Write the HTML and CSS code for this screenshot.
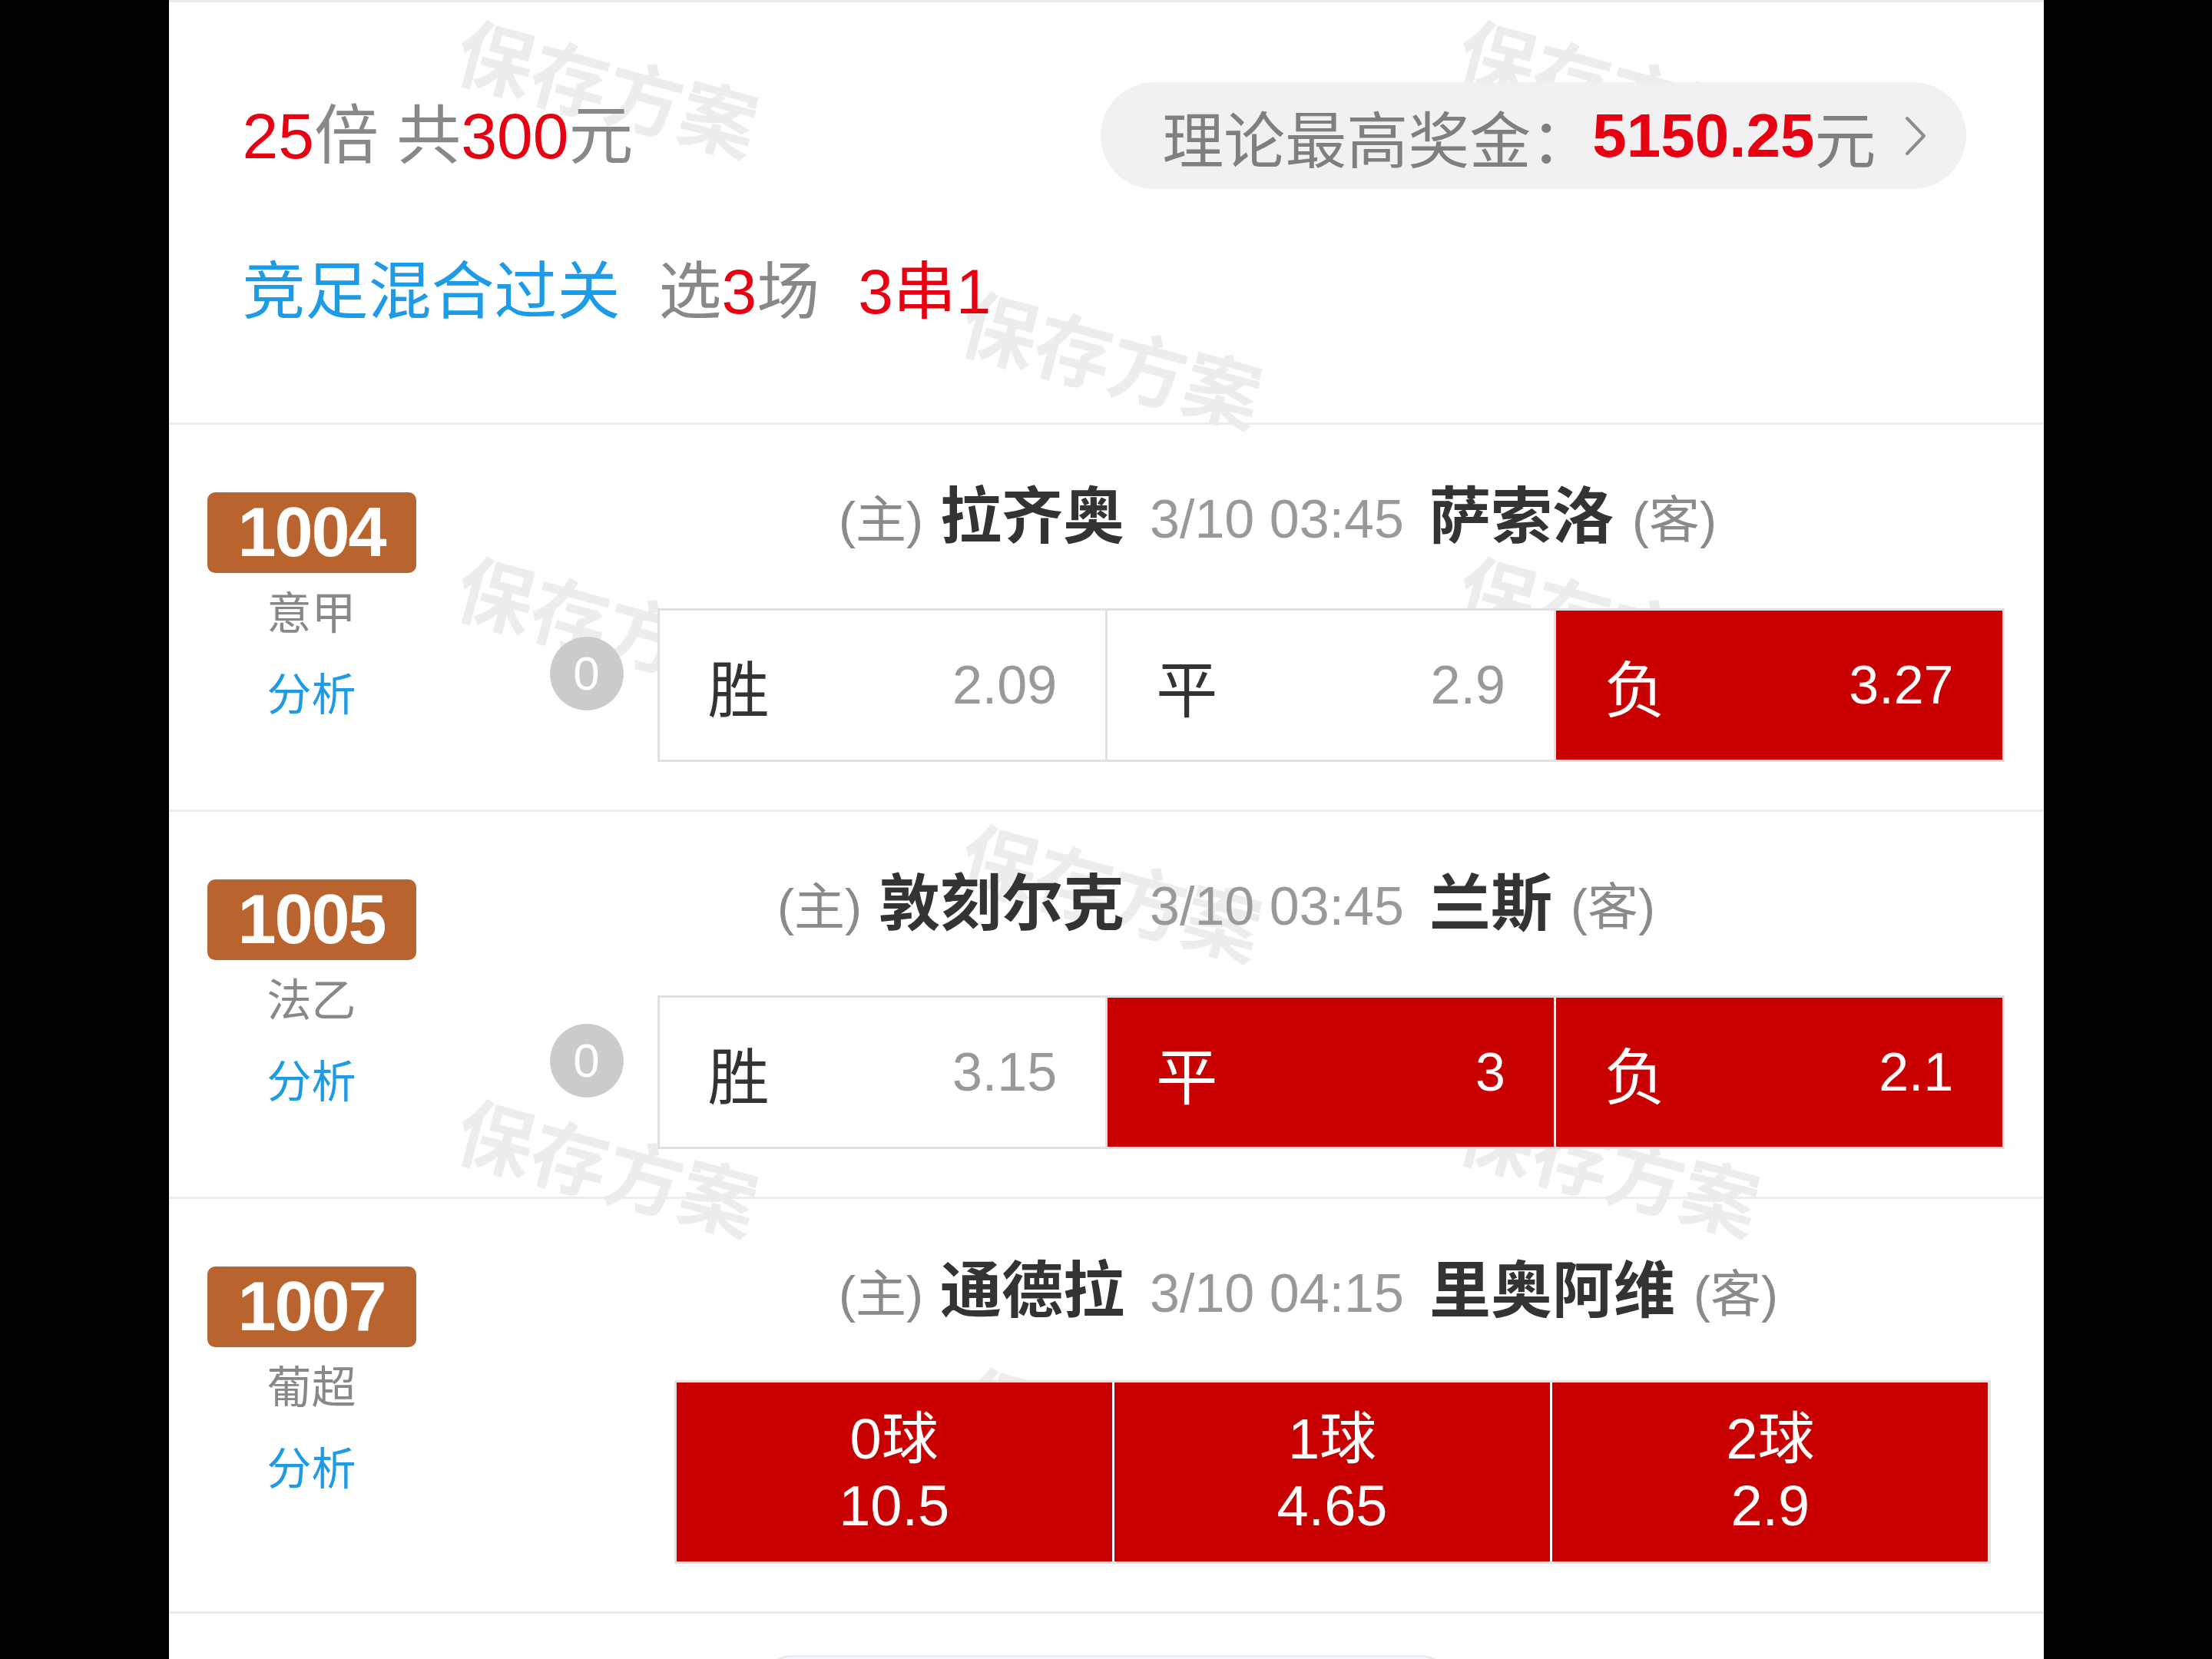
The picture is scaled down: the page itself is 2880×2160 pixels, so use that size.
FILE: index.html
```html
<!DOCTYPE html>
<html lang="zh-CN">
<head>
    <meta charset="UTF-8">
    <meta name="viewport" content="width=device-width, initial-scale=1.0">
    <title>方案详情</title>
    <link rel="stylesheet" href="styles.css">
</head>
<body>
    <div class="panel">
        <div class="watermarks">
            <span class="wm">保存方案</span>
            <span class="wm">保存方案</span>
            <span class="wm">保存方案</span>
            <span class="wm">保存方案</span>
            <span class="wm">保存方案</span>
            <span class="wm">保存方案</span>
            <span class="wm">保存方案</span>
            <span class="wm">保存方案</span>
            <span class="wm">保存方案</span>
        </div>

        <section class="summary">
            <div class="summary-top">
                <div class="stake"><em>25</em>倍 共<em>300</em>元</div>
                <div class="prize">
                    理论最高奖金：<b>5150.25</b>元
                    <svg class="chev" viewBox="0 0 30 54"><polyline points="4,4 26,27 4,50" fill="none" stroke="#8c8c8c" stroke-width="4" stroke-linecap="round" stroke-linejoin="round"/></svg>
                </div>
            </div>
            <div class="plan">
                <span class="plan-type">竞足混合过关</span>
                <span class="plan-pick">选<em>3</em>场</span>
                <span class="plan-pass">3串1</span>
            </div>
        </section>

        <div class="match">
            <div class="match-side">
                <div class="match-no">1004</div>
                <div class="league">意甲</div>
                <div class="analyse">分析</div>
            </div>
            <div class="match-main">
                <div class="teams">
                    <div class="home"><span class="tag">(主)</span><span class="name">拉齐奥</span></div>
                    <div class="time">3/10 03:45</div>
                    <div class="away"><span class="name">萨索洛</span><span class="tag">(客)</span></div>
                </div>
                <div class="bet">
                    <div class="handicap">0</div>
                    <div class="odds">
                        <div class="odd"><span class="odd-label">胜</span><span class="odd-val">2.09</span></div>
                        <div class="odd"><span class="odd-label">平</span><span class="odd-val">2.9</span></div>
                        <div class="odd on"><span class="odd-label">负</span><span class="odd-val">3.27</span></div>
                    </div>
                </div>
            </div>
        </div>

        <div class="match">
            <div class="match-side">
                <div class="match-no">1005</div>
                <div class="league">法乙</div>
                <div class="analyse">分析</div>
            </div>
            <div class="match-main">
                <div class="teams">
                    <div class="home"><span class="tag">(主)</span><span class="name">敦刻尔克</span></div>
                    <div class="time">3/10 03:45</div>
                    <div class="away"><span class="name">兰斯</span><span class="tag">(客)</span></div>
                </div>
                <div class="bet">
                    <div class="handicap">0</div>
                    <div class="odds">
                        <div class="odd"><span class="odd-label">胜</span><span class="odd-val">3.15</span></div>
                        <div class="odd on"><span class="odd-label">平</span><span class="odd-val">3</span></div>
                        <div class="odd on"><span class="odd-label">负</span><span class="odd-val">2.1</span></div>
                    </div>
                </div>
            </div>
        </div>

        <div class="match">
            <div class="match-side">
                <div class="match-no">1007</div>
                <div class="league">葡超</div>
                <div class="analyse">分析</div>
            </div>
            <div class="match-main">
                <div class="teams">
                    <div class="home"><span class="tag">(主)</span><span class="name">通德拉</span></div>
                    <div class="time">3/10 04:15</div>
                    <div class="away"><span class="name">里奥阿维</span><span class="tag">(客)</span></div>
                </div>
                <div class="goals">
                    <div class="goal on"><span>0球</span><span>10.5</span></div>
                    <div class="goal on"><span>1球</span><span>4.65</span></div>
                    <div class="goal on"><span>2球</span><span>2.9</span></div>
                </div>
            </div>
        </div>

        <div class="more"></div>
    </div>
</body>
</html>
```

FILE: styles.css
```css
* {
    box-sizing: border-box;
}
body {
    margin: 0;
    background: #000;
    font-family: "Liberation Sans", "Noto Sans CJK SC", sans-serif;
    height: 2160px;
    overflow: hidden;
}
em {
    font-style: normal;
}
.panel {
    width: 2441px;
    min-height: 2160px;
    margin: 0 auto;
    background: #fff;
    border-top: 3px solid #ececec;
    position: relative;
}

/* watermark tiles */
.watermarks {
    position: absolute;
    top: 0;
    left: 0;
    right: 0;
    bottom: 0;
    overflow: hidden;
}
.wm {
    position: absolute;
    width: 400px;
    font-size: 100px;
    line-height: 100px;
    font-weight: 700;
    color: #ededed;
    white-space: nowrap;
    transform: rotate(15deg);
}
.wm:nth-child(1) { left: 370px; top: 66px; }
.wm:nth-child(2) { left: 1674px; top: 66px; }
.wm:nth-child(3) { left: 1026px; top: 419px; }
.wm:nth-child(4) { left: 370px; top: 764px; }
.wm:nth-child(5) { left: 1674px; top: 764px; }
.wm:nth-child(6) { left: 1026px; top: 1113px; }
.wm:nth-child(7) { left: 370px; top: 1471px; }
.wm:nth-child(8) { left: 1674px; top: 1471px; }
.wm:nth-child(9) { left: 1026px; top: 1820px; }

/* summary */
.summary {
    position: relative;
    padding: 104px 101px 120px 96px;
    border-bottom: 3px solid #ececec;
}
.summary-top {
    display: flex;
    justify-content: space-between;
    align-items: center;
    height: 139px;
}
.stake {
    font-size: 84px;
    line-height: 100px;
    color: #888;
}
.stake em,
.plan em {
    color: #e60012;
}
.prize {
    display: flex;
    align-items: center;
    height: 139px;
    padding: 0 51px 0 80px;
    border-radius: 70px;
    background: #f1f1f1;
    font-size: 80px;
    color: #7f7f7f;
    white-space: nowrap;
}
.prize b {
    color: #e60012;
}
.chev {
    width: 30px;
    height: 54px;
    margin-left: 36px;
}
.plan {
    display: flex;
    margin-top: 84px;
    font-size: 82px;
    line-height: 100px;
    color: #888;
}
.plan-type {
    color: #1e9be6;
}
.plan-pick,
.plan-pass {
    margin-left: 50px;
}
.plan-pass {
    color: #e60012;
}

/* match rows */
.match {
    position: relative;
    display: flex;
    align-items: flex-start;
    padding: 70px 51px 62px 50px;
    border-bottom: 3px solid #ececec;
}
.match-side {
    width: 272px;
    margin-top: 18px;
    text-align: center;
}
.match-no {
    height: 105px;
    line-height: 105px;
    border-radius: 10px;
    background: #b9642f;
    color: #fff;
    font-size: 90px;
    font-weight: 700;
    letter-spacing: -2px;
}
.league {
    margin-top: 13px;
    font-size: 58px;
    line-height: 80px;
    color: #888;
}
.analyse {
    margin-top: 26px;
    font-size: 58px;
    line-height: 80px;
    color: #1e9be6;
}
.match-main {
    flex: 1;
    margin-left: 174px;
}
.teams {
    display: grid;
    grid-template-columns: 1fr auto 1fr;
    align-items: baseline;
    height: 100px;
    line-height: 100px;
    white-space: nowrap;
}
.home {
    justify-self: end;
}
.away {
    justify-self: start;
}
.time {
    margin: 0 33px;
    font-size: 70px;
    color: #999;
}
.tag {
    font-size: 66px;
    color: #8a8a8a;
}
.home .tag {
    margin-right: 22px;
}
.away .tag {
    margin-left: 24px;
}
.name {
    font-size: 80px;
    font-weight: 700;
    color: #333;
}
.bet {
    display: flex;
    align-items: center;
    margin-top: 69px;
}
.handicap {
    flex: none;
    width: 96px;
    height: 96px;
    margin: 0 44px 30px 0;
    border-radius: 50%;
    background: #cbcbcb;
    color: #fff;
    font-size: 62px;
    line-height: 96px;
    text-align: center;
}
.odds {
    flex: 1;
    display: grid;
    grid-template-columns: repeat(3, 1fr);
    gap: 3px;
    padding: 3px;
    height: 200px;
    background: #e1e1e1;
}
.odd {
    display: flex;
    justify-content: space-between;
    align-items: center;
    padding: 0 63px;
    background: #fff;
}
.odd-label {
    font-size: 80px;
    color: #333;
}
.odd-val {
    font-size: 70px;
    color: #999;
}
.odd.on,
.goal.on {
    background: #c80000;
}
.on span {
    color: #fff;
}
.on + .on {
    box-shadow: -3px 0 0 #fff;
}
.goals {
    display: grid;
    grid-template-columns: repeat(3, 1fr);
    gap: 3px;
    padding: 3px;
    height: 239px;
    margin: 66px 18px 0 162px;
    background: #ebe0e0;
}
.goal {
    display: flex;
    flex-direction: column;
    justify-content: center;
    align-items: center;
    font-size: 74px;
    line-height: 87px;
}
.more {
    position: relative;
    width: 900px;
    height: 80px;
    margin: 54px auto 0;
    border-radius: 40px;
    border: 3px solid #e4eef9;
    background: #f5f9fe;
}
```
